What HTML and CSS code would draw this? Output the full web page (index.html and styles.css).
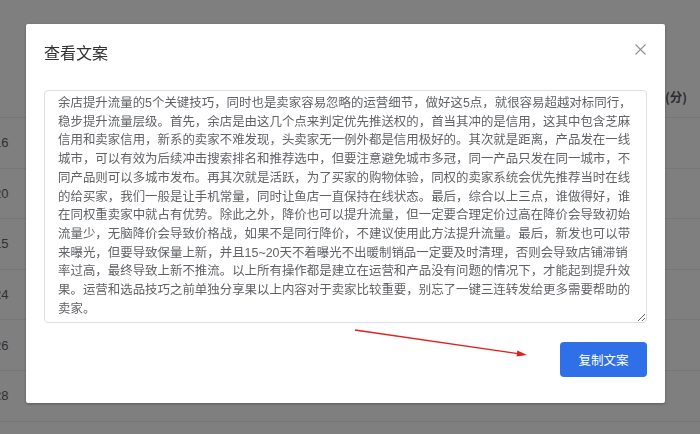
FILE: index.html
```html
<!DOCTYPE html>
<html lang="zh-CN">
<head>
<meta charset="utf-8">
<title>查看文案</title>
<link rel="stylesheet" href="styles.css">
</head>
<body>
<div class="page">
  <div class="table">
    <div class="row head"><span class="cell-first"></span><span class="cell-last">(分)</span></div>
    <div class="row"><span class="cell-first">16</span><span class="cell-last"></span></div>
    <div class="row"><span class="cell-first">20</span><span class="cell-last"></span></div>
    <div class="row"><span class="cell-first">15</span><span class="cell-last"></span></div>
    <div class="row"><span class="cell-first">24</span><span class="cell-last"></span></div>
    <div class="row"><span class="cell-first">26</span><span class="cell-last"></span></div>
    <div class="row"><span class="cell-first">28</span><span class="cell-last"></span></div>
  </div>
</div>
<div class="mask"></div>
<div class="dialog">
  <div class="dialog-header">
    <span class="dialog-title">查看文案</span>
    <button class="dialog-close" aria-label="关闭">
      <svg width="11" height="11" viewBox="0 0 11 11"><path d="M0.5 0.5 L10.5 10.5 M10.5 0.5 L0.5 10.5" stroke="#909399" stroke-width="1.1" fill="none"/></svg>
    </button>
  </div>
  <div class="dialog-body">
    <textarea class="copy-text" readonly>余店提升流量的5个关键技巧，同时也是卖家容易忽略的运营细节，做好这5点，就很容易超越对标同行，稳步提升流量层级。首先，余店是由这几个点来判定优先推送权的，首当其冲的是信用，这其中包含芝麻信用和卖家信用，新系的卖家不难发现，头卖家无一例外都是信用极好的。其次就是距离，产品发在一线城市，可以有效为后续冲击搜索排名和推荐选中，但要注意避免城市多冠，同一产品只发在同一城市，不同产品则可以多城市发布。再其次就是活跃，为了买家的购物体验，同权的卖家系统会优先推荐当时在线的给买家，我们一般是让手机常量，同时让鱼店一直保持在线状态。最后，综合以上三点，谁做得好，谁在同权重卖家中就占有优势。除此之外，降价也可以提升流量，但一定要合理定价过高在降价会导致初始流量少，无脑降价会导致价格战，如果不是同行降价，不建议使用此方法提升流量。最后，新发也可以带来曝光，但要导致保量上新，并且15~20天不着曝光不出暖制销品一定要及时清理，否则会导致店铺滞销率过高，最终导致上新不推流。以上所有操作都是建立在运营和产品没有问题的情况下，才能起到提升效果。运营和选品技巧之前单独分享果以上内容对于卖家比较重要，别忘了一键三连转发给更多需要帮助的卖家。</textarea>
  </div>
  <div class="dialog-footer">
    <button class="btn-primary">复制文案</button>
  </div>
</div>
<svg class="annotation" width="700" height="434" viewBox="0 0 700 434">
  <line x1="355" y1="330" x2="518" y2="353.6" stroke="#e0201c" stroke-width="1.3"/>
  <polygon points="527,355 517.4,350.4 516.6,356.6" fill="#e0201c"/>
</svg>
</body>
</html>
```

FILE: styles.css
```css
html, body {
  margin: 0;
  padding: 0;
  width: 700px;
  height: 434px;
  overflow: hidden;
  background: #ffffff;
  font-family: "Liberation Sans", "Noto Sans CJK SC", sans-serif;
}

.page {
  padding-top: 68px;
}

.table {
  display: flex;
  flex-direction: column;
}

.row {
  display: flex;
  justify-content: space-between;
  align-items: center;
  height: 49.6px;
  border-bottom: 1px solid #ebeef5;
  font-size: 13px;
  color: #606266;
}

.row.head {
  height: 49px;
  align-items: flex-end;
}

.row.head .cell-last {
  font-weight: bold;
  font-family: "Noto Sans CJK SC", sans-serif;
  font-size: 12.5px;
  color: #5a5c60;
  padding-bottom: 11px;
}

.cell-first {
  margin-left: -6px;
  width: 30px;
}

.cell-last {
  width: 35px;
}

.mask {
  position: fixed;
  inset: 0;
  background: rgba(0, 0, 0, 0.5);
}

.dialog {
  position: fixed;
  left: 26px;
  top: 24px;
  width: 639px;
  height: 379px;
  background: #ffffff;
  border-radius: 2px;
  box-shadow: 0 1px 3px rgba(0, 0, 0, 0.3);
  display: flex;
  flex-direction: column;
  box-sizing: border-box;
}

.dialog-header {
  display: flex;
  justify-content: space-between;
  align-items: flex-start;
  padding: 18px 19px 0 18px;
}

.dialog-title {
  font-family: "Noto Sans CJK SC", sans-serif;
  font-size: 16px;
  line-height: 21px;
  color: #303133;
}

.dialog-close {
  border: 0;
  background: transparent;
  padding: 0;
  margin-top: 2px;
  width: 11px;
  height: 11px;
  display: flex;
}

.dialog-body {
  padding: 27px 18px 0 18px;
}

.copy-text {
  display: block;
  box-sizing: border-box;
  width: 603px;
  height: 233px;
  margin: 0;
  padding: 3px 12px 3px 13px;
  border: 1px solid #dcdfe6;
  border-radius: 4px;
  font-family: "Liberation Sans", "Noto Sans CJK SC", sans-serif;
  font-size: 12.45px;
  line-height: 18.7px;
  color: #606266;
  background: #ffffff;
  overflow: hidden;
  resize: vertical;
  outline: none;
}

.dialog-footer {
  display: flex;
  justify-content: flex-end;
  padding: 19px 18px 0 18px;
}

.btn-primary {
  width: 87px;
  height: 35px;
  border: 0;
  border-radius: 4px;
  background: #2f6fe8;
  color: #ffffff;
  font-family: "Noto Sans CJK SC", sans-serif;
  font-size: 12.5px;
  padding: 0;
}

.annotation {
  position: fixed;
  left: 0;
  top: 0;
  pointer-events: none;
}
```
